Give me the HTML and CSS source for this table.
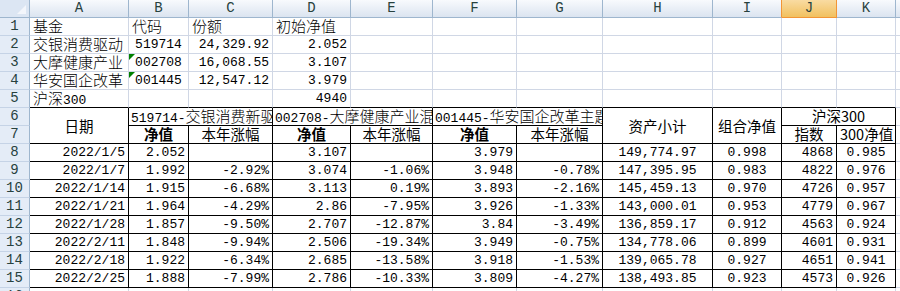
FILE: index.html
```html
<!DOCTYPE html>
<html lang="zh-CN">
<head>
<meta charset="utf-8">
<title>基金组合</title>
<link rel="stylesheet" href="styles.css">
</head>
<body>
<div class="sheet">
  <div class="c corner"></div>
  <div class="c ch">A</div><div class="c ch">B</div><div class="c ch">C</div><div class="c ch">D</div><div class="c ch">E</div><div class="c ch">F</div><div class="c ch">G</div><div class="c ch">H</div><div class="c ch selL">I</div><div class="c ch sel">J</div><div class="c ch">K</div><div class="c ch">L</div>

  <div class="c rh">1</div>
  <div class="c"><span class="z">基金</span></div><div class="c"><span class="z">代码</span></div><div class="c"><span class="z">份额</span></div><div class="c"><span class="z">初始净值</span></div><div class="c"></div><div class="c"></div><div class="c"></div><div class="c"></div><div class="c"></div><div class="c"></div><div class="c"></div><div class="c"></div>

  <div class="c rh">2</div>
  <div class="c"><span class="z">交银消费驱动</span></div><div class="c m">519714</div><div class="c r">24,329.92</div><div class="c r">2.052</div><div class="c"></div><div class="c"></div><div class="c"></div><div class="c"></div><div class="c"></div><div class="c"></div><div class="c"></div><div class="c"></div>

  <div class="c rh">3</div>
  <div class="c"><span class="z">大摩健康产业</span></div><div class="c m tri">002708</div><div class="c r">16,068.55</div><div class="c r">3.107</div><div class="c"></div><div class="c"></div><div class="c"></div><div class="c"></div><div class="c"></div><div class="c"></div><div class="c"></div><div class="c"></div>

  <div class="c rh">4</div>
  <div class="c"><span class="z">华安国企改革</span></div><div class="c m tri">001445</div><div class="c r">12,547.12</div><div class="c r">3.979</div><div class="c"></div><div class="c"></div><div class="c"></div><div class="c"></div><div class="c"></div><div class="c"></div><div class="c"></div><div class="c"></div>

  <div class="c rh">5</div>
  <div class="c kb"><span class="z">沪深</span>300</div><div class="c kb"></div><div class="c kb"></div><div class="c kb r">4940</div><div class="c kb"></div><div class="c kb"></div><div class="c kb"></div><div class="c kb"></div><div class="c kb"></div><div class="c kb"></div><div class="c kb"></div><div class="c"></div>

  <div class="c rh">6</div>
  <div class="c k v s rs2">日期</div>
  <div class="c k cs2 t6">519714-<span class="z">交银消费新驱动混合</span></div>
  <div class="c k cs2 t6">002708-<span class="z">大摩健康产业混合</span></div>
  <div class="c k cs2 t6">001445-<span class="z">华安国企改革主题</span></div>
  <div class="c k v s rs2">资产小计</div>
  <div class="c k v s rs2">组合净值</div>
  <div class="c k cs2 m s">沪深300</div>
  <div class="c"></div>

  <div class="c rh">7</div>
  <div class="c k m s b">净值</div><div class="c k m s">本年涨幅</div>
  <div class="c k m s b">净值</div><div class="c k m s">本年涨幅</div>
  <div class="c k m s b">净值</div><div class="c k m s">本年涨幅</div>
  <div class="c k m s">指数</div><div class="c k m s">300净值</div>
  <div class="c"></div>

  <div class="c rh">8</div>
  <div class="c k r">2022/1/5</div><div class="c k r">2.052</div><div class="c k r"></div><div class="c k r">3.107</div><div class="c k r"></div><div class="c k r">3.979</div><div class="c k r"></div><div class="c k m">149,774.97</div><div class="c k m">0.998</div><div class="c k r">4868</div><div class="c k m">0.985</div><div class="c"></div>

  <div class="c rh">9</div>
  <div class="c k r">2022/1/7</div><div class="c k r">1.992</div><div class="c k r">-2.92%</div><div class="c k r">3.074</div><div class="c k r">-1.06%</div><div class="c k r">3.948</div><div class="c k r">-0.78%</div><div class="c k m">147,395.95</div><div class="c k m">0.983</div><div class="c k r">4822</div><div class="c k m">0.976</div><div class="c"></div>

  <div class="c rh">10</div>
  <div class="c k r">2022/1/14</div><div class="c k r">1.915</div><div class="c k r">-6.68%</div><div class="c k r">3.113</div><div class="c k r">0.19%</div><div class="c k r">3.893</div><div class="c k r">-2.16%</div><div class="c k m">145,459.13</div><div class="c k m">0.970</div><div class="c k r">4726</div><div class="c k m">0.957</div><div class="c"></div>

  <div class="c rh">11</div>
  <div class="c k r">2022/1/21</div><div class="c k r">1.964</div><div class="c k r">-4.29%</div><div class="c k r">2.86</div><div class="c k r">-7.95%</div><div class="c k r">3.926</div><div class="c k r">-1.33%</div><div class="c k m">143,000.01</div><div class="c k m">0.953</div><div class="c k r">4779</div><div class="c k m">0.967</div><div class="c"></div>

  <div class="c rh">12</div>
  <div class="c k r">2022/1/28</div><div class="c k r">1.857</div><div class="c k r">-9.50%</div><div class="c k r">2.707</div><div class="c k r">-12.87%</div><div class="c k r">3.84</div><div class="c k r">-3.49%</div><div class="c k m">136,859.17</div><div class="c k m">0.912</div><div class="c k r">4563</div><div class="c k m">0.924</div><div class="c"></div>

  <div class="c rh">13</div>
  <div class="c k r">2022/2/11</div><div class="c k r">1.848</div><div class="c k r">-9.94%</div><div class="c k r">2.506</div><div class="c k r">-19.34%</div><div class="c k r">3.949</div><div class="c k r">-0.75%</div><div class="c k m">134,778.06</div><div class="c k m">0.899</div><div class="c k r">4601</div><div class="c k m">0.931</div><div class="c"></div>

  <div class="c rh">14</div>
  <div class="c k r">2022/2/18</div><div class="c k r">1.922</div><div class="c k r">-6.34%</div><div class="c k r">2.685</div><div class="c k r">-13.58%</div><div class="c k r">3.918</div><div class="c k r">-1.53%</div><div class="c k m">139,065.78</div><div class="c k m">0.927</div><div class="c k r">4651</div><div class="c k m">0.941</div><div class="c"></div>

  <div class="c rh">15</div>
  <div class="c k r">2022/2/25</div><div class="c k r">1.888</div><div class="c k r">-7.99%</div><div class="c k r">2.786</div><div class="c k r">-10.33%</div><div class="c k r">3.809</div><div class="c k r">-4.27%</div><div class="c k m">138,493.85</div><div class="c k m">0.923</div><div class="c k r">4573</div><div class="c k m">0.926</div><div class="c"></div>

  <div class="c rh">16</div>
  <div class="c"></div><div class="c"></div><div class="c"></div><div class="c"></div><div class="c"></div><div class="c"></div><div class="c"></div><div class="c"></div><div class="c"></div><div class="c"></div><div class="c"></div><div class="c"></div>
</div>
</body>
</html>
```

FILE: styles.css
```css
body {
  margin: 0;
  background: #fff;
}

.sheet {
  display: grid;
  grid-template-columns: 30px 99px 60px 84px 78px 82px 84px 86px 110px 69px 55px 59px 64px;
  grid-template-rows: 18px repeat(16, 18px);
  width: 900px;
  height: 291px;
  overflow: hidden;
  font: 13px/17px "Liberation Mono", "Noto Sans CJK SC", monospace;
  color: #000;
}

.c {
  box-sizing: border-box;
  border-right: 1px solid #d0d7e5;
  border-bottom: 1px solid #d0d7e5;
  padding: 0 3px;
  white-space: nowrap;
  overflow: hidden;
  text-align: left;
}

.z {
  font-size: 15px;
  line-height: 1;
  font-family: "Noto Sans CJK SC", sans-serif;
  font-weight: 300;
}

.r { text-align: right; }
.m { text-align: center; }

.s {
  font-family: "Noto Sans CJK SC", sans-serif;
  font-size: 14.5px;
  line-height: 16px;
}

.b { font-weight: 700; }

.t6 { padding-left: 2px; }

.cs2 { grid-column: span 2; }
.rs2 { grid-row: span 2; }

.v {
  display: flex;
  align-items: center;
  justify-content: center;
  padding: 0;
}

.k {
  border-right-color: #000;
  border-bottom-color: #000;
}

.kb { border-bottom-color: #000; }

.tri { position: relative; }
.tri::before {
  content: "";
  position: absolute;
  left: 0;
  top: 0;
  border-top: 6px solid #008000;
  border-right: 6px solid transparent;
}

.corner {
  position: relative;
  background: #dce6f3;
  border-right: 1px solid #9eb6ce;
  border-bottom: 1px solid #9eb6ce;
}
.corner::after {
  content: "";
  position: absolute;
  right: 3px;
  bottom: 3px;
  width: 0;
  height: 0;
  border-left: 9px solid transparent;
  border-bottom: 9px solid #f3f6fb;
}

.ch {
  background: linear-gradient(#f8fafd, #dbe4f0);
  border-right: 1px solid #9eb6ce;
  border-bottom: 1px solid #9eb6ce;
  text-align: center;
  color: #27413e;
  font-family: "Liberation Mono", monospace;
  font-size: 14px;
  line-height: 17px;
  padding: 0;
}

.selL { border-right-color: #f29536; }

.sel {
  background: linear-gradient(#f9dba2, #f1c15f);
  border-right-color: #f29536;
  border-bottom-color: #f29536;
}

.rh {
  background: #e4ecf7;
  border-right: 1px solid #9eb6ce;
  border-bottom: 1px solid #c5d3e6;
  text-align: center;
  color: #27413e;
  font-family: "Liberation Mono", monospace;
  font-size: 14px;
  padding: 0;
}
```
